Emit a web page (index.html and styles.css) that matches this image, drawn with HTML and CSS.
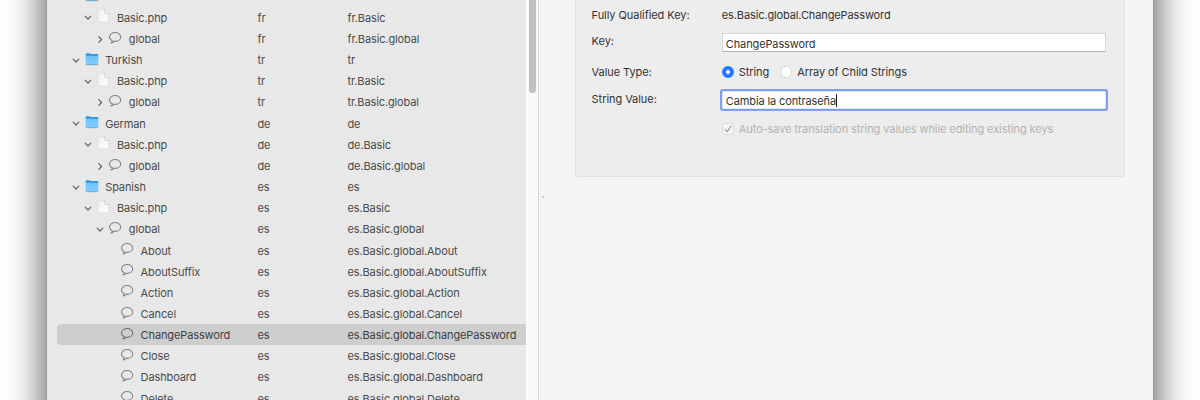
FILE: index.html
```
<!DOCTYPE html>
<html lang="en">
<head>
<meta charset="utf-8">
<title>Translation editor</title>
<link rel="stylesheet" href="styles.css">
</head>
<body>
<svg class="defs" width="0" height="0">
  <defs>
    <linearGradient id="sky" x1="0" y1="0" x2="0" y2="1"><stop offset="0" stop-color="#6cc4fb"/><stop offset="1" stop-color="#7fcdfd"/></linearGradient>
    <linearGradient id="paper" x1="0" y1="0" x2="1" y2="1"><stop offset="0" stop-color="#f1f1f1"/><stop offset="1" stop-color="#fdfdfd"/></linearGradient>
  </defs>
  <symbol id="down" viewBox="0 0 12 12"><path d="M3.2 5.1 6 8l2.8-2.9" fill="none" stroke="#666" stroke-width="1.25" stroke-linecap="round" stroke-linejoin="round"/></symbol>
  <symbol id="right" viewBox="0 0 12 12"><path d="M4.8 3.6 7.6 6.5 4.8 9.4" fill="none" stroke="#666" stroke-width="1.25" stroke-linecap="round" stroke-linejoin="round"/></symbol>
  <symbol id="folder" viewBox="0 0 14 14"><path d="M.7 2.1Q.7 1.3 1.4 1.3H4.5L5.4 2.1H12.5Q13.3 2.1 13.3 2.9V5H.7Z" fill="#2f97d8"/><path d="M.7 3.7H13.3V12Q13.3 12.7 12.6 12.7H1.4Q.7 12.7.7 12Z" fill="url(#sky)"/><path d="M.9 12.7H13.1" stroke="#5a9fc8" stroke-width=".8"/></symbol>
  <symbol id="file" viewBox="0 0 14 14"><path d="M2 .8H8.6L12.4 4.5V13H2Z" fill="url(#paper)" stroke="#d6d6d6" stroke-width=".6"/><path d="M8.6.8V4.5H12.4Z" fill="#fafafa" stroke="#c4c4c4" stroke-width=".6"/></symbol>
  <symbol id="bubble" viewBox="0 0 14 14"><path d="M4.4 9.8C2.6 9 1.5 7.7 1.5 6 1.5 3.5 4 1.5 7.1 1.5S12.7 3.5 12.7 6 10.2 10.4 7.1 10.4Q6.5 10.4 6 10.3C5.2 11.3 4.2 11.9 2.9 12 3.8 11.4 4.3 10.7 4.4 9.8Z" fill="none" stroke="currentColor" stroke-width="1.1" stroke-linejoin="round"/></symbol>
</svg>
<div class="window">
  <div class="tree">
    <div class="row l0"><div class="name"><svg class="arrow"><use href="#down"/></svg><svg class="icon"><use href="#folder"/></svg><span>French</span></div><span>fr</span><span>fr</span></div>
    <div class="row l1"><div class="name"><svg class="arrow"><use href="#down"/></svg><svg class="icon"><use href="#file"/></svg><span>Basic.php</span></div><span>fr</span><span>fr.Basic</span></div>
    <div class="row l2"><div class="name"><svg class="arrow"><use href="#right"/></svg><svg class="icon"><use href="#bubble"/></svg><span>global</span></div><span>fr</span><span>fr.Basic.global</span></div>
    <div class="row l0"><div class="name"><svg class="arrow"><use href="#down"/></svg><svg class="icon"><use href="#folder"/></svg><span>Turkish</span></div><span>tr</span><span>tr</span></div>
    <div class="row l1"><div class="name"><svg class="arrow"><use href="#down"/></svg><svg class="icon"><use href="#file"/></svg><span>Basic.php</span></div><span>tr</span><span>tr.Basic</span></div>
    <div class="row l2"><div class="name"><svg class="arrow"><use href="#right"/></svg><svg class="icon"><use href="#bubble"/></svg><span>global</span></div><span>tr</span><span>tr.Basic.global</span></div>
    <div class="row l0"><div class="name"><svg class="arrow"><use href="#down"/></svg><svg class="icon"><use href="#folder"/></svg><span>German</span></div><span>de</span><span>de</span></div>
    <div class="row l1"><div class="name"><svg class="arrow"><use href="#down"/></svg><svg class="icon"><use href="#file"/></svg><span>Basic.php</span></div><span>de</span><span>de.Basic</span></div>
    <div class="row l2"><div class="name"><svg class="arrow"><use href="#right"/></svg><svg class="icon"><use href="#bubble"/></svg><span>global</span></div><span>de</span><span>de.Basic.global</span></div>
    <div class="row l0"><div class="name"><svg class="arrow"><use href="#down"/></svg><svg class="icon"><use href="#folder"/></svg><span>Spanish</span></div><span>es</span><span>es</span></div>
    <div class="row l1"><div class="name"><svg class="arrow"><use href="#down"/></svg><svg class="icon"><use href="#file"/></svg><span>Basic.php</span></div><span>es</span><span>es.Basic</span></div>
    <div class="row l2"><div class="name"><svg class="arrow"><use href="#down"/></svg><svg class="icon"><use href="#bubble"/></svg><span>global</span></div><span>es</span><span>es.Basic.global</span></div>
    <div class="row l3"><div class="name"><svg class="arrow"></svg><svg class="icon"><use href="#bubble"/></svg><span>About</span></div><span>es</span><span>es.Basic.global.About</span></div>
    <div class="row l3"><div class="name"><svg class="arrow"></svg><svg class="icon"><use href="#bubble"/></svg><span>AboutSuffix</span></div><span>es</span><span>es.Basic.global.AboutSuffix</span></div>
    <div class="row l3"><div class="name"><svg class="arrow"></svg><svg class="icon"><use href="#bubble"/></svg><span>Action</span></div><span>es</span><span>es.Basic.global.Action</span></div>
    <div class="row l3"><div class="name"><svg class="arrow"></svg><svg class="icon"><use href="#bubble"/></svg><span>Cancel</span></div><span>es</span><span>es.Basic.global.Cancel</span></div>
    <div class="row l3 selected"><div class="name"><svg class="arrow"></svg><svg class="icon"><use href="#bubble"/></svg><span>ChangePassword</span></div><span>es</span><span>es.Basic.global.ChangePassword</span></div>
    <div class="row l3"><div class="name"><svg class="arrow"></svg><svg class="icon"><use href="#bubble"/></svg><span>Close</span></div><span>es</span><span>es.Basic.global.Close</span></div>
    <div class="row l3"><div class="name"><svg class="arrow"></svg><svg class="icon"><use href="#bubble"/></svg><span>Dashboard</span></div><span>es</span><span>es.Basic.global.Dashboard</span></div>
    <div class="row l3"><div class="name"><svg class="arrow"></svg><svg class="icon"><use href="#bubble"/></svg><span>Delete</span></div><span>es</span><span>es.Basic.global.Delete</span></div>
  </div>
  <div class="scroller"><div class="thumb"></div></div>
  <div class="splitter"><i></i></div>
  <div class="detail">
    <div class="panel">
      <div class="field fqk"><span>Fully Qualified Key:</span><span class="value">es.Basic.global.ChangePassword</span></div>
      <div class="field key"><span>Key:</span><div class="input">ChangePassword</div></div>
      <div class="field type"><span>Value Type:</span><div class="radios"><i class="radio on"></i><span>String</span><i class="radio"></i><span>Array of Child Strings</span></div></div>
      <div class="field string"><span>String Value:</span><div class="input focus">Cambia la contraseña<i class="caret"></i></div></div>
      <div class="field auto"><span></span><div class="check"><svg class="box" viewBox="0 0 12 12"><rect x=".5" y=".5" width="11" height="11" rx="2" fill="#f5f5f5" stroke="#dadada"/><path d="M3.2 6.4 5.2 8.9 9 3" fill="none" stroke="#a2a2a2" stroke-width="1.3" stroke-linecap="round" stroke-linejoin="round"/></svg><span>Auto-save translation string values while editing existing keys</span></div></div>
    </div>
  </div>
</div>
</body>
</html>
```
FILE: styles.css
```
* { box-sizing: border-box; }
body {
  margin: 0;
  height: 400px;
  overflow: hidden;
  background: #fff;
  font: 11px/16px Inter, "Liberation Sans", sans-serif;
  letter-spacing: -.12px;
  color: #4b4b4b;
}
.defs { position: absolute; }
.window {
  position: relative;
  z-index: 0;
  display: flex;
  width: 1106px;
  height: 400px;
  margin-left: 47px;
}
.window::before {
  content: "";
  position: absolute;
  z-index: -1;
  inset: -100px 0;
  background: #f5f5f5;
  box-shadow: 0 0 0 1px #999, 0 0 38px rgba(0,0,0,.74);
}
.tree {
  flex: none;
  width: 479px;
  height: 400px;
  padding-left: 10px;
  overflow: hidden;
  background: #e8e8e8;
}
.tree .row:first-child { margin-top: -14.8px; }
.row {
  display: grid;
  grid-template-columns: 200.5px 90px 1fr;
  align-items: center;
  height: 21.17px;
  white-space: nowrap;
  border-radius: 4px 0 0 4px;
}
.row > span, .name > span { padding-top: 1.7px; }
.row:first-child span { padding: 0 0 2px; }
.selected { background: #cecece; color: #404040; }
.name { display: flex; align-items: center; padding-left: 13px; }
.l1 .name { padding-left: 24.8px; }
.l2 .name { padding-left: 36.6px; }
.l3 .name { padding-left: 48.4px; }
.arrow { width: 12px; height: 12px; margin-right: 2.5px; margin-top: 1px; }
.icon { width: 14px; height: 14px; margin-right: 6.7px; margin-top: -1px; color: #858585; }
.selected .icon { color: #707070; }
.scroller { width: 12px; background: #fafafa; padding-left: 3px; }
.thumb { width: 7px; height: 93px; border-radius: 0 0 4px 4px; background: #c1c1c1; }
.splitter { width: 1px; background: #d8d8d8; }
.splitter i { display: block; width: 2px; height: 2px; margin: 196px 0 0 4px; background: #ccc; }
.detail { flex: 1; padding-left: 35.6px; color: #333; }
.panel {
  width: 550px;
  height: 177px;
  padding: 7px 0 0 16px;
  background: #ededed;
  border: 1px solid #e2e2e2;
  border-top: 0;
  border-radius: 0 0 4px 4px;
}
.field { display: grid; grid-template-columns: 130.2px 384px; align-items: start; white-space: nowrap; }
.field > span:first-child { letter-spacing: -.06px; }
.fqk { height: 26px; }
.key { height: 31px; }
.type { height: 27px; }
.string { height: 30px; }
.input {
  height: 19px;
  padding: 2px 3px;
  background: #fff;
  border: 1px solid #d6d6d6;
  border-bottom-color: #b5b5b5;
}
.focus { height: 18px; padding-top: 1px; border-color: #dce4f8; box-shadow: 0 0 0 2px #809fee; border-radius: 1px; display: flex; }
.caret { width: 1px; height: 13px; margin-top: 1px; background: #222; }
.radios, .check { display: flex; align-items: center; letter-spacing: -.08px; }
.radio { width: 12px; height: 12px; border-radius: 50%; background: #fff; border: 1px solid #d5d5d5; margin-right: 5px; }
.radio.on { border: 4px solid #2577fb; }
.radios span + .radio { margin-left: 11px; }
.box { width: 12px; height: 12px; margin-right: 5px; }
.check { color: #b3b3b3; }
```
